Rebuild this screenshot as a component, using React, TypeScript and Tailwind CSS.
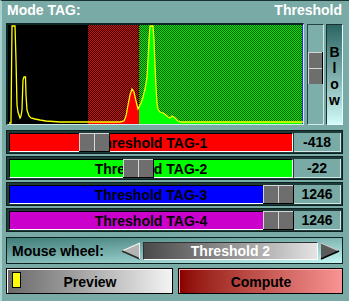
import React from 'react';

// histogram curve, local coords of the 295x99 plot
const curve =
  '1,98 3,98 4,1 7,1 8,35 9,80 10,87 12,93 13,91 14,85 15,55 16,52 17.5,52 18,70 19,85 21,91 23,93 27,94 32,95 38,96 52,97 112,97 116,96 118,91 120,80 122,70 124,64 126,67 128,76 130,84 131,82 133,78 135,72 137,64 139,52 140,35 141,15 142,1 145,1 146,15 147,40 148,62 149,78 150,84 152,87 155,88 158,90 160,92 162,93 164,91 166,92 168,94 170,96 173,97 295,97';

const rows = [
  { label: 'Threshold TAG-1', value: '-418', bar: 'bg-[#ff0000]', thumb: 'left-[70px]' },
  { label: 'Threshold TAG-2', value: '-22', bar: 'bg-[#00ff00]', thumb: 'left-[114px]' },
  { label: 'Threshold TAG-3', value: '1246', bar: 'bg-[#0000ff]', thumb: 'left-[254px]' },
  { label: 'Threshold TAG-4', value: '1246', bar: 'bg-[#cc00cc]', thumb: 'left-[254px]' },
];

const Histogram: React.FC = () => (
  <div className="relative w-[295px] h-[99px]">
    {/* dithered zones */}
    <div className="flex h-full">
      <div className="w-[80px] bg-black" />
      <div className="w-[51px] bg-[repeating-conic-gradient(#ff0000_0_25%,#000000_0_50%)] bg-size-[2px_2px]" />
      <div className="w-[163px] bg-[repeating-conic-gradient(#00f000_0_25%,#005000_0_50%)] bg-size-[2px_2px]" />
      <div className="w-[1px] bg-[#2a2aff]" />
    </div>
    <svg width="295" height="99" viewBox="0 0 295 99" className="absolute left-0 top-0">
      <defs>
        <clipPath id="under">
          <polygon points={`${curve} 295,99 0,99`} />
        </clipPath>
      </defs>
      <g clipPath="url(#under)" shapeRendering="crispEdges">
        <rect x="80" y="0" width="51" height="99" fill="#ff0000" />
        <rect x="131" y="0" width="163" height="99" fill="#00ff00" />
      </g>
      <polyline points={curve} fill="none" stroke="#ffff00" strokeWidth="1.3" />
    </svg>
  </div>
);

const Thumb: React.FC = () => (
  <div className="flex h-full border-r border-b border-black">
    <div className="w-[15px] h-full bg-[#6e6e6e] border-t border-l border-[#d6d6d6]" />
    <div className="w-[15px] h-full bg-[#6e6e6e] border-t border-l border-[#d6d6d6]" />
  </div>
);

const App: React.FC = () => {
  return (
    <div className="w-[349px] h-[301px] bg-[#7aaaa6] border-t border-t-[#173230] border-l-2 border-l-[#a9d2ce] pl-[4px] pr-[6px] font-['Liberation_Sans',Arial,sans-serif] font-bold text-[14px] leading-[16px] overflow-hidden">
      {/* Title */}
      <div className="flex justify-between h-[22px] pt-[1px] px-[1px] text-white">
        <span>Mode TAG:</span>
        <span>Threshold</span>
      </div>

      {/* Histogram + slider + Blow */}
      <div className="flex h-[102px]">
        <div className="w-[298px] border-l-2 border-t-2 border-[#0d2624] border-r border-b border-r-[#d2eae8] border-b-[#d2eae8]">
          <Histogram />
        </div>
        <div className="relative ml-[3px] mt-[1px] w-[17px] border-l border-t border-[#244442] border-r border-b border-r-[#d0e8e6] border-b-[#d0e8e6] bg-[#7eaeaa]">
          <div className="absolute left-0 top-[27px] w-[15px] h-[32px] flex flex-col border-r border-black">
            <div className="h-[16px] bg-[#6e6e6e] border-t border-l border-[#d6d6d6]" />
            <div className="h-[16px] bg-[#6e6e6e] border-t border-l border-[#d6d6d6]" />
          </div>
        </div>
        <div className="ml-[2px] mt-[1px] w-[17px] flex flex-col pt-[19px] text-black border-l border-t border-[#173230] border-r border-b border-r-[#e4ffff] border-b-[#e4ffff] bg-linear-to-b from-[#2a6664] to-[#d2fbf9]">
          <div className="h-[16px] leading-[16px] text-center">B</div>
          <div className="h-[16px] leading-[16px] text-center">l</div>
          <div className="h-[16px] leading-[16px] text-center">o</div>
          <div className="h-[16px] leading-[16px] text-center">w</div>
        </div>
      </div>

      {/* Threshold rows */}
      <div className="mt-[5px] flex flex-col gap-[2px]">
        {rows.map((r) => (
          <div key={r.label} className="flex h-[24px] border border-[#0b2220] bg-[#1f3b39] pt-[2px] pl-[2px] pr-[1px] pb-[1px] gap-[1px]">
            <div className="relative w-[284px]">
              <div className={`h-full flex items-center justify-center text-black border-t border-l border-black border-b border-r border-b-white border-r-white ${r.bar}`}>
                {r.label}
              </div>
              <div className={`absolute top-0 h-[19px] ${r.thumb}`}>
                <Thumb />
              </div>
            </div>
            <div className="flex-1 flex items-center justify-center text-black bg-[#7aaaa6] border-r border-b border-[#cfe7e5]">
              {r.value}
            </div>
          </div>
        ))}
      </div>

      {/* Mouse wheel */}
      <div className="mt-[5px] h-[27px] flex items-center border border-[#0b2220] bg-linear-to-br from-[#3e7c78] to-[#c4f5f3]">
        <div className="w-[114px] pl-[5px] text-black">Mouse wheel:</div>
        <svg width="20" height="18" viewBox="0 0 20 18" className="block">
          <polygon points="1,9 19,1 19,17" fill="#b4b4b4" />
          <polyline points="1,9 19,1" stroke="#f4f4f4" strokeWidth="1.2" fill="none" />
          <polyline points="1,9 19,17" stroke="#2a2a2a" strokeWidth="1.4" fill="none" />
          <polyline points="18.5,1 18.5,17" stroke="#f0f0f0" strokeWidth="1" fill="none" />
        </svg>
        <div className="ml-[2px] w-[175px] h-[18px] flex items-center justify-center text-white border-t border-l border-[#303030] border-b border-r border-b-white border-r-white bg-linear-to-r from-[#4a4a4a] to-[#e4e4e4]">
          Threshold 2
        </div>
        <svg width="20" height="18" viewBox="0 0 20 18" className="block ml-[2px]">
          <polygon points="1,1 19,9 1,17" fill="#5a5a5a" />
          <polyline points="1,1 19,9" stroke="#c8c8c8" strokeWidth="1.2" fill="none" />
          <polyline points="1,17 19,9" stroke="#000" strokeWidth="1.6" fill="none" />
        </svg>
      </div>

      {/* Buttons */}
      <div className="mt-[4px] h-[26px] flex gap-[5px]">
        <div className="relative w-[167px] h-full border border-black">
          <div className="h-full flex items-center justify-center text-black border-t border-l border-white bg-linear-to-r from-[#6a6a6a] to-[#f4f4f4]">
            Preview
          </div>
          <div className="absolute left-[5px] top-[3px] w-[9px] h-[16px] bg-[#ffff00] border border-black" />
        </div>
        <div className="flex-1 h-full border border-black">
          <div className="h-full flex items-center justify-center text-black border-t border-l border-[#ffb0b0] bg-linear-to-r from-[#8c0000] to-[#f89494]">
            Compute
          </div>
        </div>
      </div>
    </div>
  );
};

export default App;
